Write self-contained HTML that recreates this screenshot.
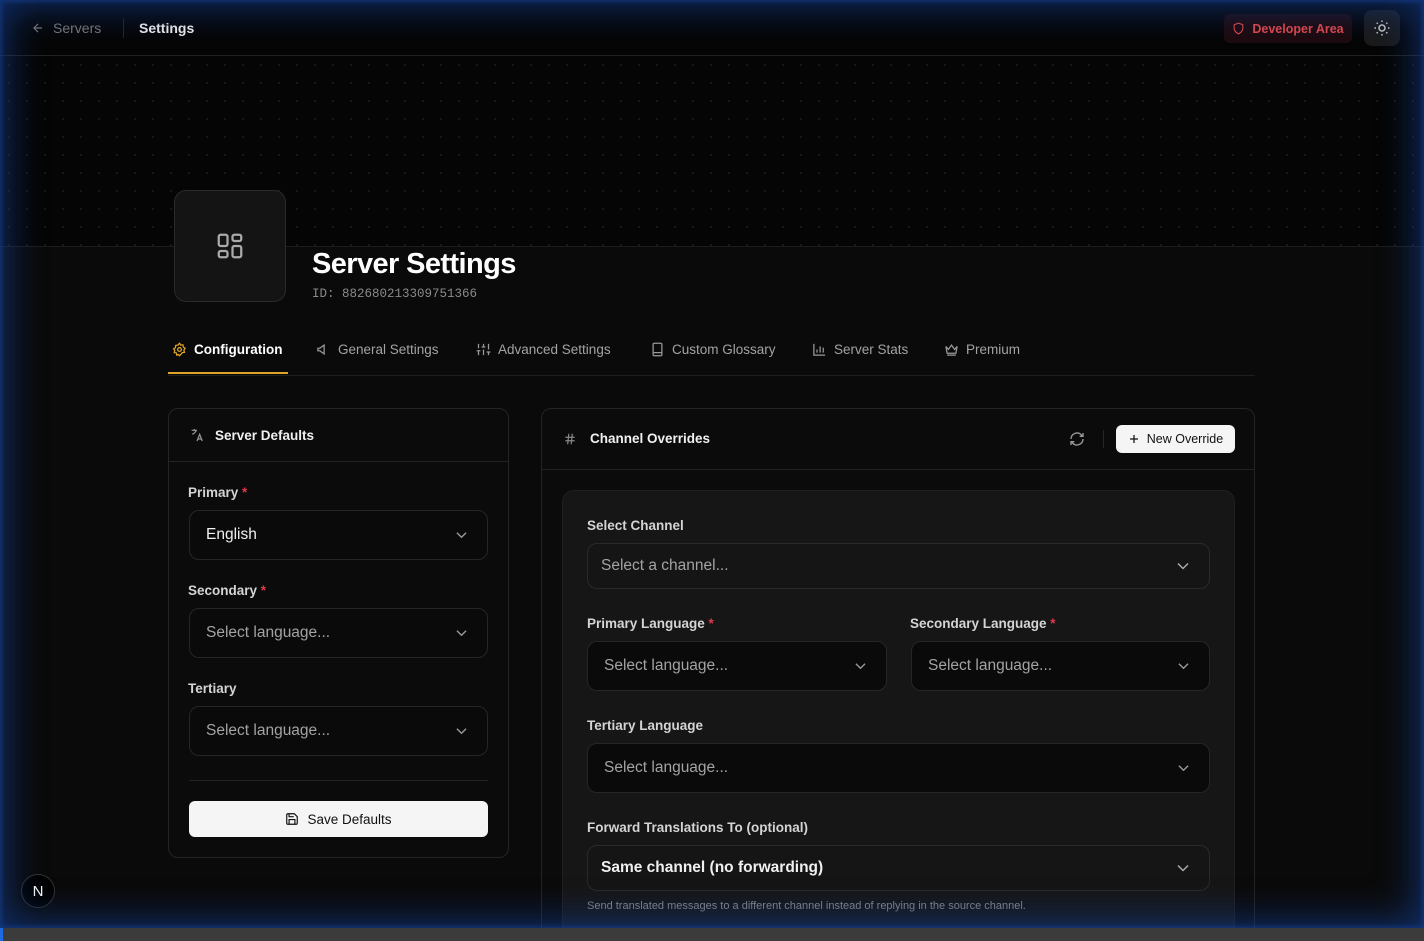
<!DOCTYPE html>
<html><head><meta charset="utf-8"><style>
*{box-sizing:border-box;margin:0;padding:0}
html,body{width:1424px;height:941px;overflow:hidden}
body{background:#0a0a0a;font-family:"Liberation Sans",sans-serif;color:#e5e5e5;position:relative}
.a{position:absolute}
.grid{left:0;top:56px;width:1424px;height:191px;background-color:#050505;background-image:radial-gradient(circle,#181818 1px,transparent 1.2px);background-size:18px 18px;border-bottom:1px solid #1c1c1c}
.hdr{left:0;top:0;width:1424px;height:56px;background:#050505;border-bottom:1px solid #222}
.glow{left:0;top:0;width:1424px;height:928px;pointer-events:none;box-shadow:inset 0 0 36px 8px rgba(18,60,140,.7),inset 0 0 4px 2px rgba(30,80,180,.5)}
.card{border:1px solid #242424;border-radius:10px;background:#0b0b0b}
.lbl{font-size:13.5px;font-weight:bold;color:#d4d4d4}
.req{color:#e0374f}
.sel{border:1px solid #262626;border-radius:10px;background:#0a0a0a;font-size:15.5px;color:#a3a3a3;display:flex;align-items:center;padding-left:16px}
.chev{position:absolute;right:20px;top:50%;margin-top:-5px}
.tab{top:342px;font-size:13.5px;color:#a3a3a3;display:flex;align-items:center;gap:7px}
svg{display:block}
</style></head><body>
<div class="a hdr"></div>
<div class="a grid"></div>
<div class="a" style="left:31px;top:20px;display:flex;align-items:center;gap:8px;font-size:14px;color:#7a7a7a">
<svg width="14" height="14" viewBox="0 0 24 24" fill="none" stroke="#7a7a7a" stroke-width="2"><path d="M19 12H5M12 19l-7-7 7-7"/></svg>Servers</div>
<div class="a" style="left:123px;top:18px;width:1px;height:20px;background:#262626"></div>
<div class="a" style="left:139px;top:20px;font-size:14px;font-weight:bold;color:#f0f0f0">Settings</div>
<div class="a" style="left:1224px;top:14px;width:128px;height:29px;background:#1d0a0d;border-radius:6px;display:flex;align-items:center;justify-content:center;gap:7px;color:#e5484d;font-size:12.5px;font-weight:bold">
<svg width="13" height="13" viewBox="0 0 24 24" fill="none" stroke="#e5484d" stroke-width="2"><path d="M12 22s8-4 8-10V5l-8-3-8 3v7c0 6 8 10 8 10z"/></svg>Developer Area</div>
<div class="a" style="left:1364px;top:10px;width:36px;height:36px;background:#1a1a1a;border-radius:8px;display:flex;align-items:center;justify-content:center">
<svg width="18" height="18" viewBox="0 0 24 24" fill="none" stroke="#ccc" stroke-width="2"><circle cx="12" cy="12" r="4"/><path d="M12 2v2M12 20v2M4.9 4.9l1.4 1.4M17.7 17.7l1.4 1.4M2 12h2M20 12h2M4.9 19.1l1.4-1.4M17.7 6.3l1.4-1.4"/></svg></div>
<div class="a" style="left:174px;top:190px;width:112px;height:112px;border:1px solid #2a2a2a;border-radius:12px;background:#141414;display:flex;align-items:center;justify-content:center">
<svg width="30" height="30" viewBox="0 0 24 24" fill="none" stroke="#aaa" stroke-width="1.8"><rect x="3" y="3" width="7" height="9" rx="1.5"/><rect x="14" y="3" width="7" height="5" rx="1.5"/><rect x="14" y="12" width="7" height="9" rx="1.5"/><rect x="3" y="16" width="7" height="5" rx="1.5"/></svg></div>
<div class="a" style="left:312px;top:248px;font-size:29px;font-weight:bold;color:#fff;letter-spacing:-.6px">Server Settings</div>
<div class="a" style="left:312px;top:287px;font-family:'Liberation Mono',monospace;font-size:12.5px;color:#8a8a8a">ID: 882680213309751366</div>
<div class="a tab" style="left:172px;color:#fff;font-weight:bold"><svg width="15" height="15" viewBox="0 0 24 24" fill="none" stroke="#e0a526" stroke-width="2"><circle cx="12" cy="12" r="3"/><path d="M12 2l2 3 3.5-.5.5 3.5 3 2-2 3 1 3.5-3.5.5L14 20l-2 2-2-2-2.5 1-.5-3.5L3.5 17l1-3.5-2-2.5 3-2 .5-3.5L9.5 5z"/></svg>Configuration</div>
<div class="a" style="left:168px;top:372px;width:120px;height:2px;background:#e0a526"></div>
<div class="a" style="left:168px;top:375px;width:1087px;height:1px;background:#1e1e1e"></div>
<div class="a tab" style="left:316px"><svg width="15" height="15" viewBox="0 0 24 24" fill="none" stroke="#999" stroke-width="2"><path d="M3 10v4h3l7 5V5L6 10z"/></svg>General Settings</div>
<div class="a tab" style="left:476px"><svg width="15" height="15" viewBox="0 0 24 24" fill="none" stroke="#999" stroke-width="2"><path d="M4 21v-7M4 10V3M12 21v-9M12 8V3M20 21v-5M20 12V3M1 14h6M9 8h6M17 16h6"/></svg>Advanced Settings</div>
<div class="a tab" style="left:650px"><svg width="15" height="15" viewBox="0 0 24 24" fill="none" stroke="#999" stroke-width="2"><rect x="5" y="2" width="14" height="20" rx="2"/><path d="M5 17h14"/></svg>Custom Glossary</div>
<div class="a tab" style="left:812px"><svg width="15" height="15" viewBox="0 0 24 24" fill="none" stroke="#999" stroke-width="2"><path d="M3 3v18h18M8 17v-5M13 17V7M18 17v-8"/></svg>Server Stats</div>
<div class="a tab" style="left:944px"><svg width="15" height="15" viewBox="0 0 24 24" fill="none" stroke="#999" stroke-width="2"><path d="M3 7l4 5 5-7 5 7 4-5-2 11H5zM5 21h14"/></svg>Premium</div>
<div class="a card" style="left:168px;top:408px;width:341px;height:450px">
<div style="height:53px;border-bottom:1px solid #222;display:flex;align-items:center;padding-left:20px;gap:10px;font-size:13.5px;font-weight:bold;color:#f0f0f0">
<svg width="16" height="16" viewBox="0 0 24 24" fill="none" stroke="#999" stroke-width="1.8"><path d="M4 5h8M8 3v2M5 11c2-1 5-4 6-6M12 21l4-10 4 10M13.5 18h5"/></svg>Server Defaults</div>
</div>
<div class="a lbl" style="left:188px;top:485px">Primary <span class="req">*</span></div>
<div class="a sel" style="left:189px;top:510px;width:299px;height:50px;color:#f0f0f0">English<svg class="chev" width="11" height="10" viewBox="0 0 12 8" fill="none" stroke="#999" stroke-width="1.5"><path d="M1 1.5l5 5 5-5"/></svg></div>
<div class="a lbl" style="left:188px;top:583px">Secondary <span class="req">*</span></div>
<div class="a sel" style="left:189px;top:608px;width:299px;height:50px">Select language...<svg class="chev" width="11" height="10" viewBox="0 0 12 8" fill="none" stroke="#999" stroke-width="1.5"><path d="M1 1.5l5 5 5-5"/></svg></div>
<div class="a lbl" style="left:188px;top:681px">Tertiary</div>
<div class="a sel" style="left:189px;top:706px;width:299px;height:50px">Select language...<svg class="chev" width="11" height="10" viewBox="0 0 12 8" fill="none" stroke="#999" stroke-width="1.5"><path d="M1 1.5l5 5 5-5"/></svg></div>
<div class="a" style="left:189px;top:780px;width:299px;height:1px;background:#242424"></div>
<div class="a" style="left:189px;top:801px;width:299px;height:36px;background:#f5f5f5;border-radius:6px;display:flex;align-items:center;justify-content:center;gap:8px;color:#111;font-size:13.5px">
<svg width="14" height="14" viewBox="0 0 24 24" fill="none" stroke="#111" stroke-width="2"><path d="M5 3h11l5 5v11a2 2 0 0 1-2 2H5a2 2 0 0 1-2-2V5a2 2 0 0 1 2-2z"/><path d="M7 21v-8h10v8M7 3v5h8"/></svg>Save Defaults</div>
<div class="a card" style="left:541px;top:408px;width:714px;height:520px;border-bottom:none;border-radius:10px 10px 0 0">
<div style="height:61px;border-bottom:1px solid #222"></div></div>
<div class="a" style="left:563px;top:431px;display:flex;align-items:center;gap:13px;font-size:13.5px;font-weight:bold;color:#f0f0f0">
<svg width="14" height="14" viewBox="0 0 24 24" fill="none" stroke="#888" stroke-width="2"><path d="M4 9h16M4 15h16M10 3L8 21M16 3l-2 18"/></svg>Channel Overrides</div>
<div class="a" style="left:1069px;top:431px"><svg width="16" height="16" viewBox="0 0 24 24" fill="none" stroke="#999" stroke-width="2"><path d="M21 12a9 9 0 0 1-15.5 6.2L3 16M3 12a9 9 0 0 1 15.5-6.2L21 8M21 3v5h-5M3 21v-5h5"/></svg></div>
<div class="a" style="left:1103px;top:430px;width:1px;height:18px;background:#262626"></div>
<div class="a" style="left:1116px;top:425px;width:119px;height:28px;background:#f5f5f5;border-radius:6px;display:flex;align-items:center;justify-content:center;gap:7px;color:#111;font-size:12.5px">
<svg width="12" height="12" viewBox="0 0 24 24" fill="none" stroke="#111" stroke-width="2.5"><path d="M12 4v16M4 12h16"/></svg>New Override</div>
<div class="a" style="left:562px;top:490px;width:673px;height:438px;background:#161616;border:1px solid #202020;border-bottom:none;border-radius:12px 12px 0 0"></div>
<div class="a lbl" style="left:587px;top:518px">Select Channel</div>
<div class="a sel" style="left:587px;top:543px;width:623px;height:46px;background:#151515;border-color:#2a2a2a;padding-left:13px">Select a channel...<svg class="chev" width="12" height="10" viewBox="0 0 12 8" fill="none" stroke="#aaa" stroke-width="1.5"><path d="M1 1.5l5 5 5-5"/></svg></div>
<div class="a lbl" style="left:587px;top:616px">Primary Language <span class="req">*</span></div>
<div class="a lbl" style="left:910px;top:616px">Secondary Language <span class="req">*</span></div>
<div class="a sel" style="left:587px;top:641px;width:300px;height:50px">Select language...<svg class="chev" width="11" height="10" viewBox="0 0 12 8" fill="none" stroke="#999" stroke-width="1.5"><path d="M1 1.5l5 5 5-5"/></svg></div>
<div class="a sel" style="left:911px;top:641px;width:299px;height:50px">Select language...<svg class="chev" width="11" height="10" viewBox="0 0 12 8" fill="none" stroke="#999" stroke-width="1.5"><path d="M1 1.5l5 5 5-5"/></svg></div>
<div class="a lbl" style="left:587px;top:718px">Tertiary Language</div>
<div class="a sel" style="left:587px;top:743px;width:623px;height:50px">Select language...<svg class="chev" width="11" height="10" viewBox="0 0 12 8" fill="none" stroke="#999" stroke-width="1.5"><path d="M1 1.5l5 5 5-5"/></svg></div>
<div class="a lbl" style="left:587px;top:820px">Forward Translations To (optional)</div>
<div class="a sel" style="left:587px;top:845px;width:623px;height:46px;background:#151515;border-color:#2a2a2a;padding-left:13px;color:#f0f0f0;font-weight:bold">Same channel (no forwarding)<svg class="chev" width="12" height="10" viewBox="0 0 12 8" fill="none" stroke="#aaa" stroke-width="1.5"><path d="M1 1.5l5 5 5-5"/></svg></div>
<div class="a" style="left:587px;top:900px;font-size:11px;color:#8a8a8a">Send translated messages to a different channel instead of replying in the source channel.</div>
<div class="a" style="left:21px;top:874px;width:34px;height:34px;border-radius:50%;background:#000;border:1px solid #333;display:flex;align-items:center;justify-content:center;color:#fff;font-size:15px">N</div>
<div class="a glow"></div>
<div class="a" style="left:0;top:928px;width:1424px;height:13px;background:#3b3b3b"></div>
<div class="a" style="left:0;top:928px;width:3px;height:13px;background:#1e6ae0"></div>
</body></html>
